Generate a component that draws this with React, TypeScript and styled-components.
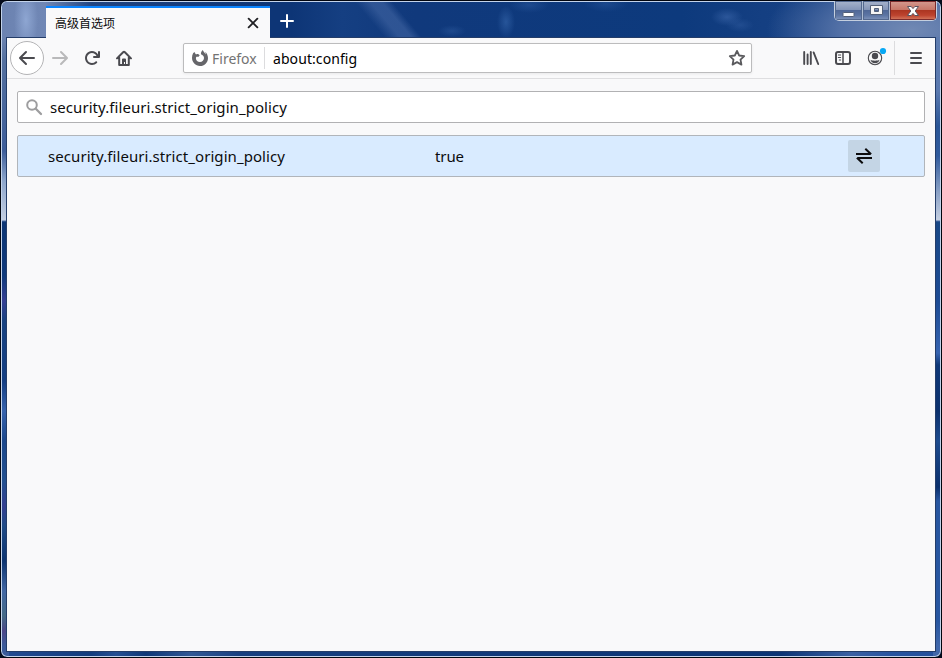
import React from 'react';
import styled, { createGlobalStyle } from 'styled-components';

const GlobalStyle = createGlobalStyle`
  *, *::before, *::after { box-sizing: border-box; }
  html, body { margin: 0; padding: 0; background: #060c1c; overflow: hidden; }
`;

const Window = styled.div`
  width: 942px;
  height: 658px;
  padding: 1px 5px 5px;
  display: flex;
  flex-direction: column;
  border: 1px solid #02060f;
  border-radius: 7px;
  box-shadow: inset 0 0 0 1px #c3d3ea;
  font-family: "Noto Sans", "Noto Sans CJK SC", sans-serif;
  background:
    linear-gradient(#7289b3 0, #6d84b1 35px, #54709f 60px, #3d5d99 150px, #8da6cc 180px, #c4cfe1 219px, #4a6ba4 220px, #0c3574 221px, #0f397b 275px, #353f93 300px, #184280 320px, #143e82 380px, #3763ad 410px, #1b478b 440px, #22508f 480px, #343f91 505px, #204b86 525px, #0c3470 560px, #4267a3 590px, #456a86 615px, #4c4788 630px, #3b5b9a 645px) left / 8px 100% no-repeat,
    linear-gradient(#6380b1 0, #5a79af 90px, #2a5596 125px, #315b9d 155px, #889fc4 190px, #c4cfe1 219px, #4a6ba4 220px, #194886 221px, #1d4b94 300px, #3764b0 352px, #0f3878 364px, #0c316d 410px, #1d4b8e 440px, #0a2f6c 486px, #2856a0 500px, #2856a0 620px, #4067aa 645px) right / 8px 100% no-repeat,
    linear-gradient(90deg, #244c93, #123c7e 90px, #254f93 115px, #0d3778 145px, #315895 190px, #173f80 240px, #0b3475 780px, #3b60a3 850px, #2754a0 890px, #234f9b) bottom / 100% 8px no-repeat,
    #0c3779;
`;

const TitleBar = styled.header`
  flex: 0 0 35px;
  margin: 0 -4px;
  padding-left: 44px;
  display: flex;
  align-items: flex-end;
  border-radius: 5px 5px 0 0;
  background:
    radial-gradient(ellipse 12px 34px at 24px 18px, #8ea6d2 0, rgba(142, 166, 210, 0) 100%),
    linear-gradient(90deg, #6c83b1 0, #7087b5 43px, rgba(80, 105, 155, 0.3) 90px, rgba(12, 55, 121, 0) 270px),
    radial-gradient(ellipse 9px 16px at 504px 20px, rgba(62, 112, 182, .5), rgba(62, 112, 182, 0)),
    radial-gradient(ellipse 14px 6px at 450px 29px, rgba(58, 104, 172, .35), rgba(58, 104, 172, 0)),
    radial-gradient(ellipse 20px 8px at 527px 3px, rgba(52, 98, 168, .4), rgba(52, 98, 168, 0)),
    radial-gradient(ellipse 22px 8px at 604px 2px, rgba(52, 98, 168, .35), rgba(52, 98, 168, 0)),
    radial-gradient(ellipse 16px 9px at 725px 15px, rgba(70, 112, 180, .5), rgba(70, 112, 180, 0)),
    radial-gradient(ellipse 14px 7px at 738px 23px, rgba(62, 104, 172, .35), rgba(62, 104, 172, 0)),
    radial-gradient(ellipse 145px 65px at 910px 28px, #7189b4 0, #5270a6 50%, rgba(20, 63, 130, 0) 100%),
    linear-gradient(50deg, rgba(62, 98, 160, 0) 38%, rgba(62, 98, 160, .65) 47%, rgba(62, 98, 160, .65) 54%, rgba(62, 98, 160, 0) 60%) 318px 0 / 140px 100% no-repeat,
    linear-gradient(90deg, #0d3576 0, #0d3576 290px, #153f82 340px, #10397c 412px, #0d3a7d 680px, #143f82 760px, #1b468a 100%);
`;

const Tab = styled.div`
  flex: none;
  width: 224px;
  height: 32px;
  margin-bottom: -1px;
  padding: 0 12px 0 9px;
  display: flex;
  align-items: center;
  justify-content: space-between;
  border-top: 2px solid #0a84ff;
  background: #f9f9fa;
  position: relative;
`;

const TabTitle = styled.span`
  margin-top: -1px;
  font: 12px/16px "Noto Sans CJK SC", sans-serif;
  color: #0c0c0d;
`;

const NewTab = styled.button`
  width: 34px;
  height: 33px;
  padding: 0;
  display: grid;
  place-items: center;
  border: 0;
  background: none;
`;

const Controls = styled.div`
  align-self: flex-start;
  margin: -1px 3px 0 auto;
  height: 20px;
  display: flex;
  border: 1px solid #c4cfdf;
  border-top: 0;
  border-radius: 0 0 5px 5px;
  overflow: hidden;
`;

const Control = styled.button<{ $width: number; $close?: boolean }>`
  width: ${p => p.$width}px;
  padding: 0;
  display: grid;
  place-items: center;
  border: 0;
  border-right: ${p => (p.$close ? '0' : '1px solid #aebdd3')};
  box-shadow: inset 0 0 0 1px ${p => (p.$close ? '#7b2b2c' : '#53688e')};
  background: ${p => p.$close
    ? 'linear-gradient(#d49a90 0, #c77769 45%, #ac3622 50%, #bd432e 75%, #d67f64 100%)'
    : 'linear-gradient(#a7b4cc 0, #8596b8 45%, #506897 50%, #5c75a4 75%, #8296bb 100%)'};
`;

const Client = styled.div`
  flex: 1;
  display: flex;
  flex-direction: column;
  border: 1px solid #243d69;
  background: #f9f9fa;
`;

const Toolbar = styled.nav`
  flex: 0 0 41px;
  padding-left: 3px;
  display: flex;
  align-items: center;
  border-bottom: 1px solid #dedee0;
`;

const ToolButton = styled.button<{ $width?: number; $round?: boolean; $dim?: boolean }>`
  flex: none;
  width: ${p => p.$width ?? 32}px;
  height: 34px;
  padding: 0;
  display: grid;
  place-items: center;
  border: ${p => (p.$round ? '1px solid #b4b4b6' : '0')};
  border-radius: ${p => (p.$round ? '50%' : '2px')};
  background: ${p => (p.$round ? '#fff' : 'none')};
  color: ${p => (p.$dim ? '#b9b9ba' : '#4a4a4f')};
`;

const AddressBar = styled.div`
  flex: none;
  width: 569px;
  height: 30px;
  margin: 0 43px;
  padding: 0 6px 0 8px;
  display: flex;
  align-items: center;
  border: 1px solid #bcbcbd;
  border-radius: 2px;
  box-shadow: 0 1px 3px rgba(0, 0, 0, .07);
  background: #fff;
  color: #5a5a5d;
`;

const Identity = styled.div`
  width: 73px;
  height: 22px;
  display: flex;
  align-items: center;
  gap: 4px;
  border-right: 1px solid #dcdcde;
  font-size: 14px;
  color: #737373;
`;

const Address = styled.span`
  flex: 1;
  padding-left: 8px;
  font-size: 14px;
  letter-spacing: 0.08px;
  color: #000;
`;

const Separator = styled.span`
  flex: none;
  width: 1px;
  height: 34px;
  margin: 0 1px 0 3px;
  background: #dcdcde;
`;

const Page = styled.main`
  flex: 1;
  padding: 12px 10px;
  display: flex;
  flex-direction: column;
  gap: 12px;
  font-size: 15px;
  letter-spacing: 0.07px;
  color: #0c0c0d;
`;

const Search = styled.div`
  height: 32px;
  padding-left: 8px;
  display: flex;
  align-items: center;
  gap: 8px;
  border: 1px solid #b1b1b3;
  border-radius: 2px;
  background: #fff;
`;

const PrefRow = styled.div`
  height: 42px;
  padding: 0 44px 0 30px;
  display: grid;
  grid-template-columns: 387px 1fr 32px;
  align-items: center;
  border: 1px solid #b1b5ba;
  border-radius: 2px;
  background: #d9ebff;
`;

const PrefValue = styled.span`
  letter-spacing: -0.1px;
`;

const Toggle = styled.button`
  width: 32px;
  height: 32px;
  padding: 0;
  display: grid;
  place-items: center;
  border: 0;
  border-radius: 2px;
  background: #c4d5e5;
  color: #0c0c0d;
`;

const Icon = styled.svg.attrs<{ $size?: number }>(p => ({
  viewBox: '0 0 16 16',
  fill: p.fill ?? 'none',
  stroke: p.stroke ?? 'currentColor',
  strokeWidth: p.strokeWidth ?? 2,
  strokeLinecap: p.strokeLinecap ?? 'round',
  strokeLinejoin: p.strokeLinejoin ?? 'round',
}))<{ $size?: number }>`
  flex: none;
  width: ${p => p.$size ?? 16}px;
  height: ${p => p.$size ?? 16}px;
  display: block;
  overflow: visible;
`;

export default function App() {
  return (
    <>
      <GlobalStyle />
      <Window>
        <TitleBar>
          <Tab>
            <TabTitle>高级首选项</TabTitle>
            <Icon $size={10} stroke="#202024" strokeWidth={2.9}><path d="M1 1l14 14M15 1L1 15" /></Icon>
          </Tab>
          <NewTab aria-label="New tab">
            <Icon stroke="#fff"><path d="M8 2v12M2 8h12" /></Icon>
          </NewTab>
          <Controls>
            <Control $width={28} aria-label="Minimize">
              <svg width="13" height="16"><rect x="1" y="9.5" width="11" height="4" rx=".5" fill="#fff" stroke="#536078" /></svg>
            </Control>
            <Control $width={27} aria-label="Maximize">
              <svg width="13" height="15"><path fillRule="evenodd" d="M.5 2.5h12v9H.5zM4.5 5.5v3h4v-3z" fill="#f5f5f5" stroke="#536078" /></svg>
            </Control>
            <Control $width={46} $close aria-label="Close">
              <svg width="14" height="16"><path d="M1.5 3.5h3.7L7 5.6l1.8-2.1h3.7L9.2 8l3.3 4.5H8.8L7 10.4l-1.8 2.1H1.5L4.8 8z" fill="#fff" stroke="#59535f" /></svg>
            </Control>
          </Controls>
        </TitleBar>
        <Client>
          <Toolbar>
            <ToolButton $width={34} $round aria-label="Back">
              <Icon><path d="M15 8H1.5M7 2L1 8l6 6" /></Icon>
            </ToolButton>
            <ToolButton $dim aria-label="Forward">
              <Icon><path d="M1 8h13.5M9 2l6 6-6 6" /></Icon>
            </ToolButton>
            <ToolButton aria-label="Reload">
              <Icon><path fill="currentColor" stroke="none" d="M15 1a1 1 0 0 0-1 1v2.418A6.995 6.995 0 1 0 8 15a6.954 6.954 0 0 0 4.95-2.05 1 1 0 0 0-1.414-1.414A5.019 5.019 0 1 1 12.549 6H10a1 1 0 0 0 0 2h5a1 1 0 0 0 1-1V2a1 1 0 0 0-1-1z" /></Icon>
            </ToolButton>
            <ToolButton aria-label="Home">
              <Icon><path d="M1 8.4l6.1-6.2a1.3 1.3 0 0 1 1.8 0L15 8.4M3.2 7.5V15h9.6V7.5" /><path fill="currentColor" stroke="none" d="M6 14V9.5a1 1 0 0 1 1-1h2a1 1 0 0 1 1 1V14H9v-2H8v2z" /></Icon>
            </ToolButton>
            <AddressBar>
              <Identity>
                <Icon>
                  <path fill="#66666a" stroke="none" d="M1.2 3.1C.4 4.5 0 6.1 0 7.8 0 12.4 3.5 16 8 16s8-3.6 8-8.1c0-2.6-1.2-4.7-2.7-6 .3 1 .4 1.8.3 2.6C12.8 2.7 11.5 1.9 10.8 0 9.4 1.1 8.7 2.8 9 4.3c1.8.7 3 2.1 3 3.8 0 2.3-1.7 4-4 4-2.4 0-4.1-1.8-4.1-3.8 0-.6.2-1.1.5-1.5.7-.2 1.5 0 2.1.2.1-.8.7-1.4 1.5-1.8-.7-.1-1.4-.6-1.8-1.2-.8-.1-1.5.1-2.1.4-.8-.6-1.1-1.3-1.1-2.2-.7.2-1.3.5-1.8.9z" />
                </Icon>
                Firefox
              </Identity>
              <Address>about:config</Address>
              <Icon strokeWidth={1.8}><path d="M8 .9l2.15 4.6 5.05.65-3.7 3.45.95 5L8 12.1l-4.45 2.5.95-5L.8 6.15l5.05-.65z" /></Icon>
            </AddressBar>
            <ToolButton aria-label="Library">
              <Icon><path d="M1.2 2v12M4.6 4.5V14M7.8 2v12M10.6 2.4L15.2 14" strokeWidth="1.9" /></Icon>
            </ToolButton>
            <ToolButton aria-label="Sidebars">
              <Icon><rect x="1" y="2" width="14" height="12" rx="2" /><path d="M8 2v12" strokeWidth="1.5" /><path d="M3.3 5h2.4M3.3 7.5h2.4M4.3 10h1.4" strokeWidth="1" /></Icon>
            </ToolButton>
            <ToolButton aria-label="Account">
              <Icon>
                <circle cx="8" cy="8" r="6.7" strokeWidth="1.1" />
                <circle cx="8" cy="6" r="3.2" fill="currentColor" stroke="none" />
                <path d="M3.5 9.8C5.7 11 10.3 11 12.5 9.8 12 12 10.5 13.2 8 13.2S4 12 3.5 9.8z" fill="currentColor" stroke="none" />
                <circle cx="16" cy="1" r="3.1" fill="#08a8f4" stroke="none" />
              </Icon>
            </ToolButton>
            <Separator />
            <ToolButton $width={40} aria-label="Menu">
              <Icon><path d="M3 3h10M3 8h10M3 13h10" /></Icon>
            </ToolButton>
          </Toolbar>
          <Page>
            <Search>
              <Icon stroke="#9d9d9f"><circle cx="6" cy="6" r="4.8" /><path d="M9.8 9.8L15 15" strokeWidth="2.3" /></Icon>
              security.fileuri.strict_origin_policy
            </Search>
            <PrefRow>
              <span>security.fileuri.strict_origin_policy</span>
              <PrefValue>true</PrefValue>
              <Toggle aria-label="Toggle">
                <Icon strokeLinecap="butt" strokeLinejoin="miter"><path d="M0 6h14.5M9.3.7l5.8 5.6M16 10H1.5M6.7 15.3L.9 9.7" /></Icon>
              </Toggle>
            </PrefRow>
          </Page>
        </Client>
      </Window>
    </>
  );
}
